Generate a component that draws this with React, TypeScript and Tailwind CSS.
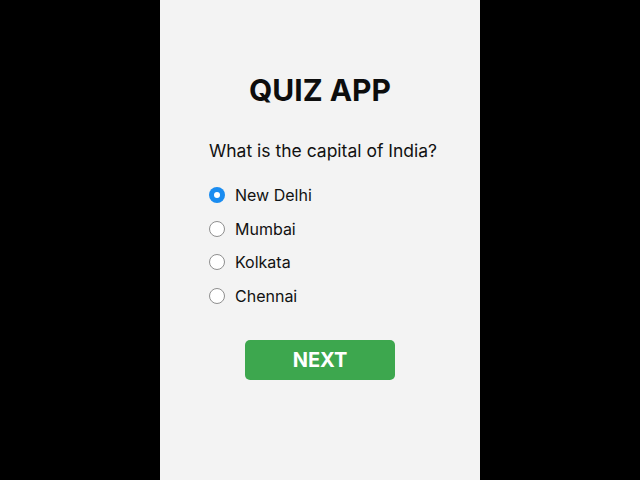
import React, { useState } from "react";

const options = ["New Delhi", "Mumbai", "Kolkata", "Chennai"];

function Radio({ checked }: { checked: boolean }) {
  return checked ? (
    <span className="w-[16px] h-[16px] rounded-full bg-[#1a8cf0] flex items-center justify-center">
      <span className="w-[6px] h-[6px] rounded-full bg-white" />
    </span>
  ) : (
    <span className="w-[16px] h-[16px] rounded-full border border-[#8f8f8f] bg-white" />
  );
}

export default function App() {
  const [selected, setSelected] = useState(0);
  return (
    <div className="w-full h-[480px] bg-black flex justify-center" style={{ fontFamily: "Inter, 'Noto Sans', sans-serif" }}>
      <div className="w-[320px] h-full bg-[#f3f3f3] flex flex-col items-center pt-[73px]">
        <h1 className="text-[30px] leading-[34px] font-bold text-[#0d0d0d]">QUIZ APP</h1>
        <div className="w-[232px] ml-[10px] mt-[32px]">
          <p className="text-[17.5px] leading-[24px] text-[#111] whitespace-nowrap">What is the capital of India?</p>
          <div className="mt-[21px] flex flex-col gap-[11.7px]">
            {options.map((o, i) => (
              <label key={o} className="flex items-center gap-[10px] h-[22px] cursor-pointer" onClick={() => setSelected(i)}>
                <Radio checked={selected === i} />
                <span className="text-[16px] leading-[22px] text-[#111]">{o}</span>
              </label>
            ))}
          </div>
        </div>
        <button className="mt-[33px] w-[150px] h-[40px] rounded-[5px] bg-[#3da74e] text-white text-[20px] font-bold">
          NEXT
        </button>
      </div>
    </div>
  );
}
